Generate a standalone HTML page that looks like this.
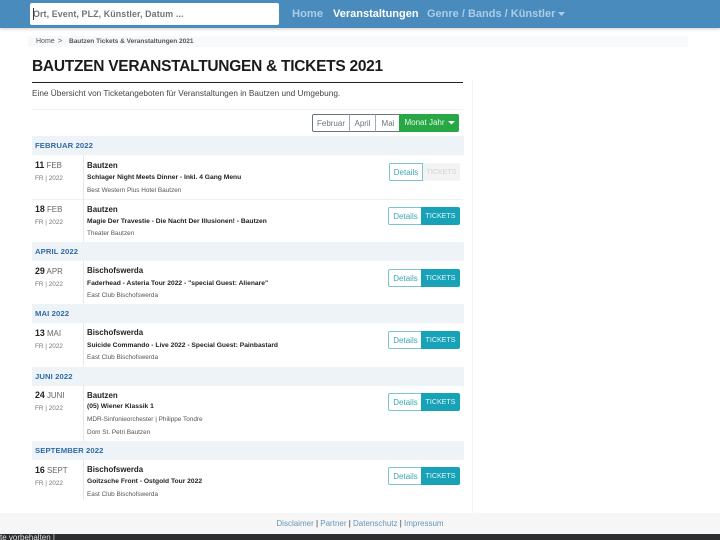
<!DOCTYPE html>
<html lang="de"><head><meta charset="utf-8"><title>Bautzen Veranstaltungen</title>
<style>
*{box-sizing:border-box}
html,body{margin:0;padding:0;background:#fff}
body{width:720px;height:540px;overflow:hidden;position:relative;font-family:"Liberation Sans",sans-serif;color:#212529}
.a{position:absolute;white-space:nowrap}
#nav{left:0;top:0;width:720px;height:28px;background:#4a8bbd;box-shadow:0 1px 3px rgba(120,110,100,.35)}
#search{left:30px;top:3px;width:249px;height:22px;background:#fff;border-radius:2px;font-size:8.9px;font-weight:bold;color:#6f7477;line-height:22px;padding-left:3px;letter-spacing:.1px}
#search:before{content:"";position:absolute;left:3px;top:5px;width:1px;height:12px;background:#333}
.nl{top:7px;font-size:11px;line-height:14px;font-weight:bold;color:#a9cdea}
#crumbbg{left:28px;top:36px;width:660px;height:11px;background:#f8f9fa}
.cr{top:37px;font-size:7px;line-height:10px;color:#555}
h1{margin:0;left:32px;top:57px;font-size:15.5px;line-height:20px;font-weight:bold;color:#1b1b1f;letter-spacing:-.27px}
#rule{left:32px;top:82px;width:431px;height:1px;background:#222}
#intro{left:32px;top:88px;font-size:8.25px;line-height:12px;color:#444}
#vline{left:472px;top:80px;width:1px;height:433px;background:#f2f3f4}
#hr2{left:32px;top:109px;width:431px;height:1px;background:#f1f1f1}
.b{top:114px;height:18px;font-size:8px;line-height:17px;text-align:center;border:1px solid #6c757d;color:#6c757d;background:#fff}
.m{left:32px;width:432px;height:19px;background:#eef3f7;font-size:7.7px;line-height:19px;font-weight:bold;color:#2f6ba8;padding-left:3px;letter-spacing:.1px}
.d{left:35px;font-size:7.9px;line-height:11px;color:#666}
.d b{font-size:8.8px;color:#222}
.s{left:35px;font-size:6.4px;line-height:10px;color:#777}
.v{left:83px;width:1px;background:#e6e8ea}
.c{left:87px;font-size:7.9px;line-height:11px;font-weight:bold;color:#222}
.t{left:87px;font-size:6.7px;line-height:10px;font-weight:bold;color:#222}
.l{left:87px;font-size:6.4px;line-height:10px;color:#555}
.sep{left:32px;width:431px;height:1px;background:#eef0f1}
.de{left:388px;width:34px;height:18px;border:1px solid #7cc5d1;border-right:0;border-radius:2px 0 0 2px;font-size:8px;line-height:18px;text-align:center;color:#3aa7b6;background:#fff}
.ti{left:421px;width:39px;height:18px;background:#17a2b8;border-radius:0 2px 2px 0;font-size:7.1px;line-height:19px;text-align:center;color:#e5f6f8}
#foot{left:0;top:513px;width:720px;height:21px;background:#f6f6f6;font-size:8px;line-height:22px;text-align:center;color:#333}
#foot span{color:#6796b8}
#status{left:0;top:534px;width:720px;height:6px;background:#2b2d2f;color:#ddd;font-size:8px;line-height:8px;overflow:hidden}
</style></head><body>
<div class="a" id="nav"></div>
<div class="a" id="search">Ort, Event, PLZ, Künstler, Datum ...</div>
<div class="a nl" style="left:292px;font-size:11.2px">Home</div>
<div class="a nl" style="left:333px;color:#fff">Veranstaltungen</div>
<div class="a nl" style="left:427px">Genre / Bands / Künstler</div>
<svg class="a" style="left:558px;top:12px" width="7" height="4"><path d="M0 0H7L3.5 4Z" fill="#a9cdea"/></svg>

<div class="a" id="crumbbg"></div>
<div class="a cr" style="left:36px">Home</div>
<div class="a cr" style="left:58px">&gt;</div>
<div class="a cr" style="left:69px;font-weight:bold;font-size:6.5px">Bautzen Tickets &amp; Veranstaltungen 2021</div>
<h1 class="a">BAUTZEN VERANSTALTUNGEN &amp; TICKETS 2021</h1>
<div class="a" id="rule"></div>
<div class="a" id="intro">Eine Übersicht von Ticketangeboten für Veranstaltungen in Bautzen und Umgebung.</div>
<div class="a" id="vline"></div>
<div class="a" id="hr2"></div>

<div class="a b" style="left:312px;width:38px;border-radius:2px 0 0 2px">Februar</div>
<div class="a b" style="left:349px;width:27px;border-left-color:#aaa">April</div>
<div class="a b" style="left:375px;width:25px;border-left-color:#aaa;border-right:0">Mai</div>
<div class="a b" style="left:399px;width:60px;background:#28a745;border:0;color:#e9f7ec;line-height:18px;border-radius:0 2px 2px 0;padding-right:9px">Monat Jahr</div>
<svg class="a" style="left:448px;top:121px" width="7" height="4"><path d="M0 0H7L3.5 3.5Z" fill="#fff"/></svg>

<div class="a m" style="top:136px">FEBRUAR 2022</div>
<div class="a d" style="top:160px"><b>11</b> FEB</div>
<div class="a s" style="top:174px">FR | 2022</div>
<div class="a v" style="top:155px;height:44px"></div>
<div class="a c" style="top:160px">Bautzen</div>
<div class="a t" style="top:173px">Schlager Night Meets Dinner - Inkl. 4 Gang Menu</div>
<div class="a l" style="top:186px">Best Western Plus Hotel Bautzen</div>
<div class="a de" style="left:389px;top:163px;width:34px;height:18px;border-right:1px solid #7cc5d1">Details</div>
<div class="a ti" style="left:423px;top:163px;width:37px;background:#f3f3f3;color:#d4d4d4">TICKETS</div>
<div class="a sep" style="top:199px"></div>

<div class="a d" style="top:204px"><b>18</b> FEB</div>
<div class="a s" style="top:218px">FR | 2022</div>
<div class="a v" style="top:199px;height:43px"></div>
<div class="a c" style="top:204px">Bautzen</div>
<div class="a t" style="top:217px">Magie Der Travestie - Die Nacht Der Illusionen! - Bautzen</div>
<div class="a l" style="top:229px">Theater Bautzen</div>
<div class="a de" style="top:207px">Details</div>
<div class="a ti" style="top:207px">TICKETS</div>

<div class="a m" style="top:242px">APRIL 2022</div>
<div class="a d" style="top:266px"><b>29</b> APR</div>
<div class="a s" style="top:280px">FR | 2022</div>
<div class="a v" style="top:261px;height:43px"></div>
<div class="a c" style="top:265px">Bischofswerda</div>
<div class="a t" style="top:279px">Faderhead - Asteria Tour 2022 - "special Guest: Alienare"</div>
<div class="a l" style="top:291px">East Club Bischofswerda</div>
<div class="a de" style="top:269px">Details</div>
<div class="a ti" style="top:269px">TICKETS</div>

<div class="a m" style="top:304px">MAI 2022</div>
<div class="a d" style="top:328px"><b>13</b> MAI</div>
<div class="a s" style="top:342px">FR | 2022</div>
<div class="a v" style="top:323px;height:43px"></div>
<div class="a c" style="top:327px">Bischofswerda</div>
<div class="a t" style="top:341px">Suicide Commando - Live 2022 - Special Guest: Painbastard</div>
<div class="a l" style="top:353px">East Club Bischofswerda</div>
<div class="a de" style="top:331px">Details</div>
<div class="a ti" style="top:331px">TICKETS</div>

<div class="a m" style="top:367px">JUNI 2022</div>
<div class="a d" style="top:390px"><b>24</b> JUNI</div>
<div class="a s" style="top:404px">FR | 2022</div>
<div class="a v" style="top:385px;height:57px"></div>
<div class="a c" style="top:390px">Bautzen</div>
<div class="a t" style="top:402px">(05) Wiener Klassik 1</div>
<div class="a l" style="top:415px">MDR-Sinfonieorchester | Philippe Tondre</div>
<div class="a l" style="top:428px">Dom St. Petri Bautzen</div>
<div class="a de" style="top:393px">Details</div>
<div class="a ti" style="top:393px">TICKETS</div>

<div class="a m" style="top:441px">SEPTEMBER 2022</div>
<div class="a d" style="top:465px"><b>16</b> SEPT</div>
<div class="a s" style="top:479px">FR | 2022</div>
<div class="a v" style="top:460px;height:40px"></div>
<div class="a c" style="top:464px">Bischofswerda</div>
<div class="a t" style="top:477px">Goitzsche Front - Ostgold Tour 2022</div>
<div class="a l" style="top:490px">East Club Bischofswerda</div>
<div class="a de" style="top:467px">Details</div>
<div class="a ti" style="top:467px">TICKETS</div>

<div class="a" id="foot"><span>Disclaimer</span> | <span>Partner</span> | <span>Datenschutz</span> | <span>Impressum</span></div>
<div class="a" id="status">te vorbehalten |</div>
</body></html>
